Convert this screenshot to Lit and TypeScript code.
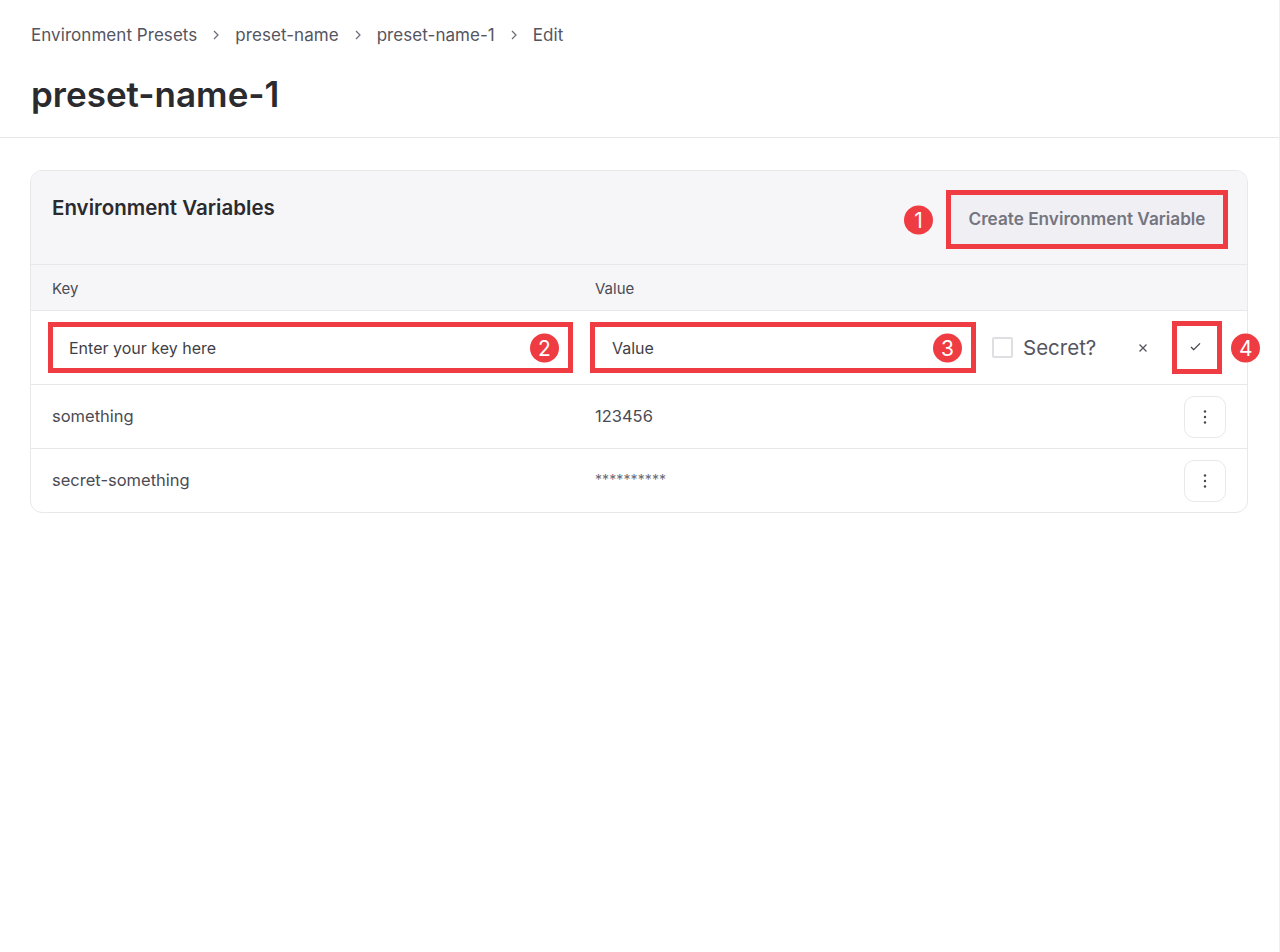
import { LitElement, html, css } from "lit";
import { customElement } from "lit/decorators.js";

const rows = [
  { key: "something", value: "123456" },
  { key: "secret-something", value: "**********" },
];

@customElement("app-root")
export class AppRoot extends LitElement {
  static styles = css`
    :host {
      display: block;
      min-height: 952px;
      box-sizing: border-box;
      background: #fff;
      border-right: 1px solid #eeeef0;
      font-family: "Inter", "Liberation Sans", sans-serif;
      color: #4b4b55;
    }

    .page-head {
      height: 138px;
      box-sizing: border-box;
      padding: 24px 31px 0;
      border-bottom: 1px solid #e6e6e9;
    }

    .crumbs {
      display: flex;
      align-items: center;
      gap: 14px;
      height: 21px;
      font-size: 17px;
      letter-spacing: 0.05px;
      color: #55555f;
    }

    .crumbs svg {
      width: 10px;
      height: 10px;
      fill: none;
      stroke: #6b6b75;
      stroke-width: 1.2;
    }

    h1 {
      margin: 26px 0 0;
      font-size: 35px;
      line-height: 46px;
      font-weight: 600;
      color: #2b2b2f;
    }

    .content {
      padding: 32px 30px 0;
    }

    .card {
      width: 1218px;
      box-sizing: border-box;
      border: 1px solid #e8e8eb;
      border-radius: 12px;
    }

    .card-head {
      height: 94px;
      box-sizing: border-box;
      display: flex;
      justify-content: space-between;
      padding: 19px 21px 0;
      background: #f6f6f8;
      border-bottom: 1px solid #e8e8eb;
      border-radius: 11px 11px 0 0;
    }

    h2 {
      margin: 5px 0 0;
      font-size: 20.5px;
      line-height: 26px;
      font-weight: 600;
      color: #2b2b2f;
    }

    .create {
      position: relative;
      width: 282px;
      height: 59px;
      margin-right: -2px;
      padding: 0 0 3px;
      box-sizing: border-box;
      border: 5px solid #ef3c42;
      background: #f0eff4;
      color: #75757f;
      font: 600 17.2px "Inter", "Liberation Sans", sans-serif;
    }

    .row {
      display: grid;
      grid-template-columns: 543px 1fr 42px;
      align-items: center;
      padding: 0 21px;
      border-bottom: 1px solid #e8e8eb;
      font-size: 16.5px;
      height: 64px;
      box-sizing: border-box;
    }

    .row > span {
      padding-bottom: 2px;
    }

    .row:last-child {
      border-bottom: none;
      height: 63px;
    }

    .row.labels {
      height: 46px;
      background: #f6f6f8;
      font-size: 15px;
      font-weight: 400;
    }

    .row.labels span {
      padding: 2px 0 0;
      color: #4b4b55;
    }

    .row .secret {
      font-size: 14px;
      letter-spacing: 0.1px;
      color: #6b6b75;
    }

    .more {
      width: 42px;
      height: 42px;
      padding: 0;
      display: flex;
      align-items: center;
      justify-content: center;
      background: #fff;
      border: 1px solid #e8e8eb;
      border-radius: 10px;
    }

    .more svg {
      width: 4px;
      height: 16px;
      fill: #45454d;
    }

    .edit {
      height: 74px;
      box-sizing: border-box;
      display: flex;
      align-items: center;
      padding-left: 17px;
      border-bottom: 1px solid #e8e8eb;
    }

    .box {
      position: relative;
      height: 51px;
      box-sizing: border-box;
      border: 5px solid #ef3c42;
      display: flex;
      align-items: center;
      font-size: 16px;
      color: #3f3f47;
    }

    .key-box {
      width: 525px;
      padding-left: 16px;
    }

    .value-box {
      width: 386px;
      margin-left: 17px;
      padding-left: 17px;
    }

    .check {
      width: 21px;
      height: 21px;
      margin-left: 16px;
      box-sizing: border-box;
      border: 2px solid #dfdfe3;
      border-radius: 2px;
    }

    .secret-label {
      margin-left: 10px;
      font-size: 20.5px;
      color: #55555f;
    }

    .cancel {
      width: 10px;
      height: 10px;
      margin-left: 42px;
      fill: none;
      stroke: #55555f;
      stroke-width: 1.3;
    }

    .confirm {
      position: relative;
      width: 50px;
      height: 53px;
      margin-left: 24px;
      padding: 0 4px 2px 0;
      box-sizing: border-box;
      border: 5px solid #ef3c42;
      display: flex;
      align-items: center;
      justify-content: center;
    }

    .confirm svg {
      width: 11px;
      height: 9px;
      fill: none;
      stroke: #3f3f47;
      stroke-width: 1.4;
    }

    .badge {
      position: absolute;
      top: 50%;
      transform: translateY(-50%);
      width: 29px;
      height: 29px;
      border-radius: 50%;
      background: #ef3c42;
      color: #fff;
      font: 400 21px/29px "Inter", "Liberation Sans", sans-serif;
      text-align: center;
    }

    .create .badge {
      left: -47px;
    }

    .box .badge {
      right: 9px;
    }

    .confirm .badge {
      left: 54px;
    }
  `;

  render() {
    return html`
      <header class="page-head">
        <nav class="crumbs">
          <span>Environment Presets</span>${this.chevron()}
          <span>preset-name</span>${this.chevron()}
          <span>preset-name-1</span>${this.chevron()}
          <span>Edit</span>
        </nav>
        <h1>preset-name-1</h1>
      </header>
      <main class="content">
        <section class="card">
          <div class="card-head">
            <h2>Environment Variables</h2>
            <button class="create">
              <span class="badge">1</span>
              Create Environment Variable
            </button>
          </div>
          <div class="row labels"><span>Key</span><span>Value</span></div>
          <div class="edit">
            <div class="box key-box">
              Enter your key here<span class="badge">2</span>
            </div>
            <div class="box value-box">
              Value<span class="badge">3</span>
            </div>
            <div class="check"></div>
            <span class="secret-label">Secret?</span>
            <svg class="cancel" viewBox="0 0 10 10">
              <path d="M1.5 1.5l7 7M8.5 1.5l-7 7" />
            </svg>
            <div class="confirm">
              <svg viewBox="0 0 12 10"><path d="M1 5.5l3 3 7-7" /></svg>
              <span class="badge">4</span>
            </div>
          </div>
          ${rows.map(
            (r) => html`<div class="row">
              <span>${r.key}</span>
              <span class=${r.value.startsWith("*") ? "secret" : ""}
                >${r.value}</span
              >
              <button class="more">
                <svg viewBox="0 0 4 16">
                  <circle cx="2" cy="2.5" r="1.2" />
                  <circle cx="2" cy="8" r="1.2" />
                  <circle cx="2" cy="13.5" r="1.2" />
                </svg>
              </button>
            </div>`
          )}
        </section>
      </main>
    `;
  }

  chevron() {
    return html`<svg viewBox="0 0 10 10"><path d="M3 1l4 4-4 4" /></svg>`;
  }
}
